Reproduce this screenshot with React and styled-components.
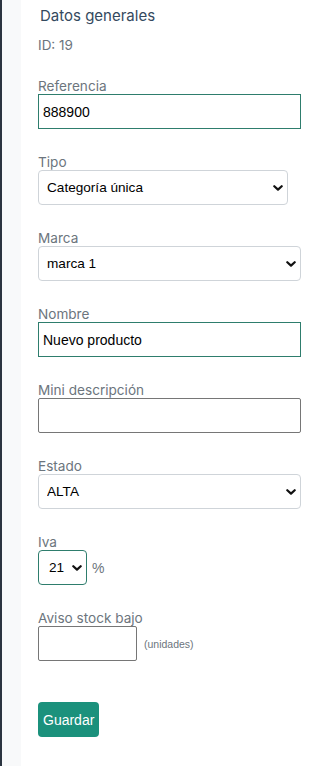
import styled, { createGlobalStyle } from 'styled-components';

const GlobalStyle = createGlobalStyle`
  html, body {
    margin: 0;
    padding: 0;
    background: #ffffff;
  }
  * {
    box-sizing: border-box;
  }
`;

const Page = styled.div`
  display: flex;
  min-height: 766px;
  width: 326px;
`;

const Rail = styled.div`
  width: 21px;
  flex-shrink: 0;
  background: #f8f9fa;
  border-left: 2px solid #2b3440;
`;

const Content = styled.main`
  flex: 1;
  padding: 6px 25px 0 17px;
  font-family: Inter, "Liberation Sans", sans-serif;
`;

const Title = styled.h5`
  margin: 0;
  padding-left: 2px;
  font-size: 15px;
  line-height: 20px;
  font-weight: 400;
  color: #34495e;
`;

const Meta = styled.p`
  margin: 11px 0 25px;
  font-size: 13.5px;
  line-height: 16px;
  color: #6c757d;
`;

const Group = styled.div`
  margin-bottom: 25px;
`;

const Label = styled.label`
  display: block;
  font-size: 13.6px;
  line-height: 16px;
  color: #6c757d;
`;

const Row = styled.div`
  display: flex;
  align-items: center;
  gap: ${(p) => p.$gap || 5}px;
`;

const TextInput = styled.input`
  display: block;
  width: ${(p) => p.$width || '100%'};
  height: 35px;
  margin: 0;
  padding: 0 4px;
  font-family: "Liberation Sans", Arial, sans-serif;
  font-size: 14px;
  color: #000;
  background: #fff;
  border: 1px solid ${(p) => (p.$accent ? '#2e7d6d' : '#767676')};
  border-radius: ${(p) => (p.$accent ? '0' : '2px')};
  outline: none;
`;

const SelectWrap = styled.div`
  position: relative;
  width: ${(p) => p.$width || '100%'};
`;

const Select = styled.select`
  appearance: none;
  -webkit-appearance: none;
  display: block;
  width: 100%;
  height: 35px;
  margin: 0;
  padding: 0 20px 0 8px;
  font-family: "Liberation Sans", Arial, sans-serif;
  font-size: 13.6px;
  color: #000;
  background: #fff;
  border: 1px solid ${(p) => (p.$accent ? '#2e7d6d' : '#cfd4d9')};
  border-radius: 4px;
  outline: none;
  text-align: ${(p) => (p.$center ? 'center' : 'left')};
  text-align-last: ${(p) => (p.$center ? 'center' : 'left')};
`;

const Chevron = styled.svg`
  position: absolute;
  right: 5px;
  top: 15px;
  pointer-events: none;
`;

const Unit = styled.span`
  font-family: "Liberation Sans", Arial, sans-serif;
  font-size: ${(p) => p.$size || 14}px;
  color: #6c757d;
`;

const SaveButton = styled.button`
  margin-top: 16px;
  height: 35px;
  padding: 0 5px;
  font-family: "Liberation Sans", Arial, sans-serif;
  font-size: 14px;
  color: #fff;
  background: #1b917c;
  border: none;
  border-radius: 4px;
  cursor: pointer;
`;

function DropDown({ width, accent, center, value, options }) {
  return (
    <SelectWrap $width={width}>
      <Select $accent={accent} $center={center} defaultValue={value}>
        {options.map((o) => (
          <option key={o} value={o}>{o}</option>
        ))}
      </Select>
      <Chevron width="10" height="6" viewBox="0 0 10 6">
        <polyline points="1.3,1.2 5,4.6 8.7,1.2" fill="none" stroke="#111" strokeWidth="2.2" strokeLinecap="round" strokeLinejoin="round" />
      </Chevron>
    </SelectWrap>
  );
}

export default function App() {
  return (
    <>
      <GlobalStyle />
      <Page>
        <Rail />
        <Content>
          <Title>Datos generales</Title>
          <Meta>ID: 19</Meta>

          <Group>
            <Label>Referencia</Label>
            <TextInput $accent defaultValue="888900" />
          </Group>

          <Group>
            <Label>Tipo</Label>
            <DropDown width="250px" value="Categoría única" options={['Categoría única', 'Multicategoría']} />
          </Group>

          <Group>
            <Label>Marca</Label>
            <DropDown value="marca 1" options={['marca 1', 'marca 2']} />
          </Group>

          <Group>
            <Label>Nombre</Label>
            <TextInput $accent defaultValue="Nuevo producto" />
          </Group>

          <Group>
            <Label>Mini descripción</Label>
            <TextInput />
          </Group>

          <Group>
            <Label>Estado</Label>
            <DropDown value="ALTA" options={['ALTA', 'BAJA']} />
          </Group>

          <Group>
            <Label>Iva</Label>
            <Row $gap={5}>
              <DropDown width="49px" accent center value="21" options={['0', '4', '10', '21']} />
              <Unit>%</Unit>
            </Row>
          </Group>

          <Group>
            <Label>Aviso stock bajo</Label>
            <Row $gap={7}>
              <TextInput $width="99px" />
              <Unit $size={10.5}>(unidades)</Unit>
            </Row>
          </Group>

          <SaveButton type="button">Guardar</SaveButton>
        </Content>
      </Page>
    </>
  );
}
